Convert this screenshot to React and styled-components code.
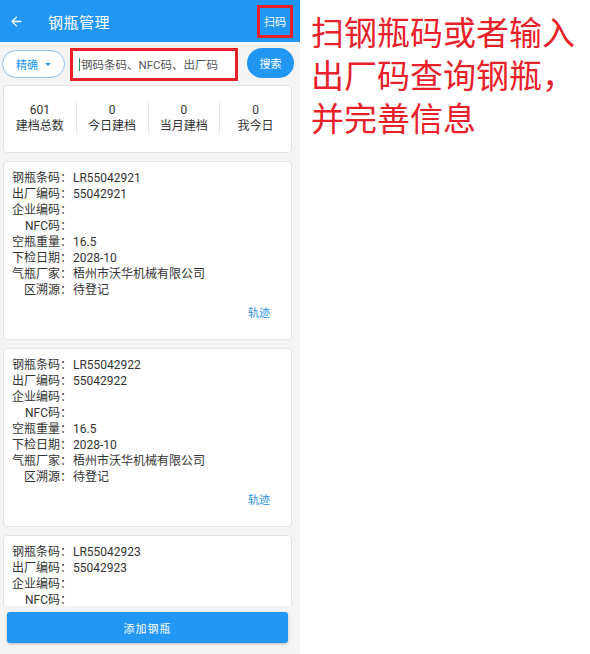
import React from 'react';
import styled, { createGlobalStyle } from 'styled-components';
import { ArrowLeft } from 'lucide-react';

const GlobalStyle = createGlobalStyle`
  html, body {
    margin: 0;
    padding: 0;
    background: #ffffff;
    font-family: Roboto, "Noto Sans CJK SC", sans-serif;
  }
`;

const Page = styled.div`
  display: flex;
  width: 590px;
  height: 654px;
  overflow: hidden;
`;

const Phone = styled.div`
  width: 300px;
  height: 654px;
  background: #f4f4f4;
  display: flex;
  flex-direction: column;
  color: #333;
`;

const Header = styled.div`
  height: 42px;
  background: #2196f3;
  display: flex;
  align-items: center;
  color: #fff;
  flex-shrink: 0;
`;

const Back = styled.div`
  width: 32px;
  display: flex;
  justify-content: center;
  margin-right: 16px;
`;

const Title = styled.div`
  flex: 1;
  font-size: 15px;
  letter-spacing: 0.5px;
`;

const Scan = styled.div`
  width: 30px;
  height: 27px;
  margin-right: 7px;
  border: 3px solid #e8202a;
  display: flex;
  align-items: center;
  justify-content: center;
  font-size: 11px;
`;

const SearchRow = styled.div`
  display: flex;
  align-items: center;
  padding: 5px 6px 3px 2px;
  height: 34px;
  flex-shrink: 0;
`;

const ModePill = styled.div`
  width: 61px;
  height: 26px;
  border: 1px solid #8fc3ee;
  border-radius: 14px;
  background: #fff;
  color: #2196f3;
  font-size: 11px;
  display: flex;
  align-items: center;
  justify-content: center;
  gap: 7px;
`;

const Caret = styled.span`
  width: 0;
  height: 0;
  border-left: 3px solid transparent;
  border-right: 3px solid transparent;
  border-top: 3px solid #2196f3;
`;

const InputBox = styled.div`
  width: 156px;
  height: 27px;
  margin-left: 5px;
  border: 3px solid #e8202a;
  background: #fff;
  display: flex;
  align-items: center;
  padding-left: 6px;
  font-size: 11.5px;
  color: #555;
  white-space: nowrap;
  overflow: hidden;
  box-sizing: content-box;
`;

const Cursor = styled.span`
  width: 1px;
  height: 13px;
  background: #1aa160;
  margin-right: 1px;
`;

const SearchBtn = styled.div`
  margin-left: auto;
  width: 47px;
  height: 30px;
  border-radius: 15px;
  background: #2196f3;
  color: #fff;
  font-size: 11px;
  display: flex;
  align-items: center;
  justify-content: center;
  margin-top: -3px;
`;

const List = styled.div`
  flex: 1;
  overflow: hidden;
  padding: 1px 8px 0 3px;
  display: flex;
  flex-direction: column;
  gap: 8px;
`;

const Panel = styled.div`
  background: #fff;
  border: 1px solid #e3e3e3;
  border-radius: 4px;
  flex-shrink: 0;
`;

const Stats = styled(Panel)`
  display: grid;
  grid-template-columns: repeat(4, 1fr);
  padding: 16px 0 18px;
`;

const Stat = styled.div`
  text-align: center;
  font-size: 12px;
  line-height: 16px;
  border-left: ${p => (p.first ? 'none' : '1px solid #e8e8e8')};
`;

const Card = styled(Panel)`
  padding: 8px 9px 17px 8px;
  font-size: 12px;
`;

const Line = styled.div`
  display: flex;
  line-height: 16px;
  white-space: nowrap;
`;

const Label = styled.span`
  width: 60px;
  text-align: right;
  flex-shrink: 0;
  margin-right: 1px;
`;

const Actions = styled.div`
  display: flex;
  justify-content: flex-end;
  margin-top: 8px;
  padding-right: 12px;
  line-height: 16px;
  font-size: 11px;
  color: #2a8fe0;
`;

const Footer = styled.div`
  height: 48px;
  flex-shrink: 0;
  padding: 6px 12px 0 7px;
  box-sizing: border-box;
`;

const AddBtn = styled.div`
  height: 31px;
  border-radius: 3px;
  background: #2196f3;
  color: #fff;
  font-size: 11px;
  letter-spacing: 1px;
  display: flex;
  align-items: center;
  justify-content: center;
  box-shadow: 0 1px 3px rgba(0, 0, 0, 0.25);
`;

const Note = styled.div`
  padding: 10px 0 0 11px;
  color: #e8202a;
  font-size: 33px;
  line-height: 43px;
  font-family: "Noto Sans CJK SC", sans-serif;
`;

const stats = [
  ['601', '建档总数'],
  ['0', '今日建档'],
  ['0', '当月建档'],
  ['0', '我今日'],
];

const bottles = ['55042921', '55042922', '55042923'];

function BottleCard({ code }) {
  const rows = [
    ['钢瓶条码：', 'LR' + code],
    ['出厂编码：', code],
    ['企业编码：', ''],
    ['NFC码：', ''],
    ['空瓶重量：', '16.5'],
    ['下检日期：', '2028-10'],
    ['气瓶厂家：', '梧州市沃华机械有限公司'],
    ['区溯源：', '待登记'],
  ];
  return (
    <Card>
      {rows.map(([k, v]) => (
        <Line key={k}>
          <Label>{k}</Label>
          <span>{v}</span>
        </Line>
      ))}
      <Actions>轨迹</Actions>
    </Card>
  );
}

export default function App() {
  return (
    <Page>
      <GlobalStyle />
      <Phone>
        <Header>
          <Back>
            <ArrowLeft size={15} strokeWidth={2.2} />
          </Back>
          <Title>钢瓶管理</Title>
          <Scan>扫码</Scan>
        </Header>
        <SearchRow>
          <ModePill>
            精确 <Caret />
          </ModePill>
          <InputBox>
            <Cursor />
            钢码条码、NFC码、出厂码
          </InputBox>
          <SearchBtn>搜索</SearchBtn>
        </SearchRow>
        <List>
          <Stats>
            {stats.map(([n, l], i) => (
              <Stat key={l} first={i === 0}>
                <div>{n}</div>
                <div>{l}</div>
              </Stat>
            ))}
          </Stats>
          {bottles.map(c => (
            <BottleCard key={c} code={c} />
          ))}
        </List>
        <Footer>
          <AddBtn>添加钢瓶</AddBtn>
        </Footer>
      </Phone>
      <Note>
        扫钢瓶码或者输入
        <br />
        出厂码查询钢瓶，
        <br />
        并完善信息
      </Note>
    </Page>
  );
}
